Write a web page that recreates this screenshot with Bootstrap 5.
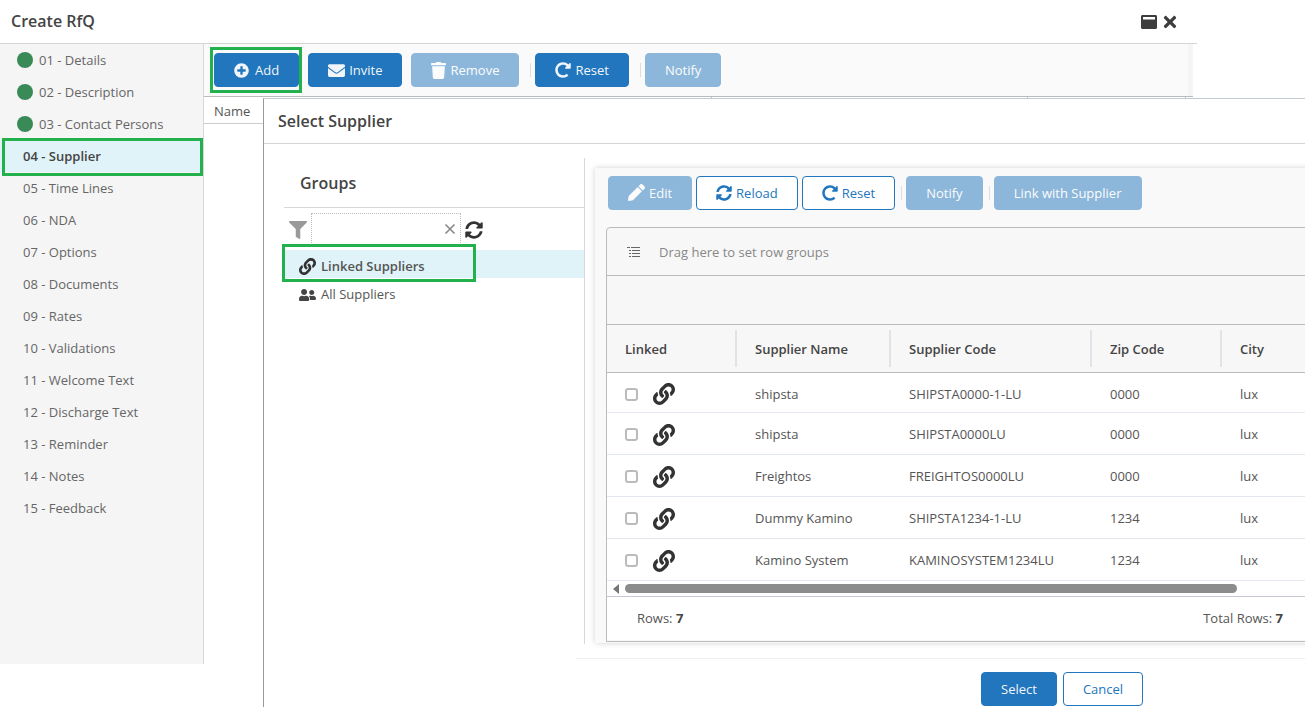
<!DOCTYPE html>
<html lang="en">
<head>
    <meta charset="UTF-8">
    <meta name="viewport" content="width=device-width, initial-scale=1.0">
    <title>Create RfQ</title>
    <link href="https://cdn.jsdelivr.net/npm/bootstrap@5.3.0/dist/css/bootstrap.min.css" rel="stylesheet">
    <style>
        html, body { height: 707px; overflow: hidden; }
        body { font-family: "Open Sans", "Liberation Sans", sans-serif; font-size: 13px; color: #555; background: #fff; position: relative; }
        svg.ico { fill: currentColor; flex: none; display: block; }

        /* back window */
        .rfq-window { width: 1197px; height: 664px; }
        .rfq-title { height: 44px; border-bottom: 1px solid #d4d4d4; padding: 0 20px 0 11px; }
        .rfq-title h1 { font-size: 16px; font-weight: 600; color: #444; margin: 0; }
        .rfq-steps { width: 204px; background: #f5f5f5; border-right: 1px solid #d8d8d8; flex: none; }
        .step-item { height: 32px; padding: 2px 0 0 23px; position: relative; color: #666; }
        .step-item.done { padding-left: 17px; gap: 6px; }
        .step-dot { width: 16px; height: 16px; border-radius: 50%; background: #398a57; flex: none; margin-top: -2px; }
        .step-item.current { background: #e0f3f8; color: #444; font-weight: 600; }
        .hl-box { position: relative; }
        .hl-box::after { content: ""; position: absolute; border: 3px solid #22b14c; pointer-events: none; }
        .step-item.hl-box::after { left: 2px; right: 0; top: -2px; bottom: -4px; }
        .rfq-main { width: 989px; flex: none; }
        .tool-row { background: #fafafa; height: 52px; padding: 9px 0 0 10px; border-right: 5px solid #f5f5f5; gap: 9px; }
        .btn.tool-btn { height: 34px; padding: 2px 19px 0; font-size: 13px; gap: 4px; display: inline-flex; align-items: center; justify-content: center; border-radius: 4px;
            --bs-btn-bg: #2176bd; --bs-btn-border-color: #2176bd; --bs-btn-disabled-bg: #2176bd; --bs-btn-disabled-border-color: #2176bd; --bs-btn-disabled-opacity: .5; --bs-btn-color: #f1f5f9; --bs-btn-disabled-color: #fff; }
        .btn.tool-btn svg.ico { margin-top: -2px; }
        .btn.tool-btn.btn-outline-primary { background: #fff; color: #2176bd; }
        .tool-btn.hl-box::after { left: -5px; right: -4px; top: -7px; bottom: -7px; }
        .tool-sep { width: 1px; height: 14px; background: #ddd; margin: 10px -5px 0 2px; }
        .back-head { height: 28px; border-top: 1px solid #bbb; border-bottom: 1px solid #ccc; padding: 3px 0 0 10px; color: #555;
            background: linear-gradient(#bbb, #bbb) 507px 0 / 1px 2px no-repeat, linear-gradient(#bbb, #bbb) 823px 0 / 1px 2px no-repeat, linear-gradient(#bbb, #bbb) 981px 0 / 1px 2px no-repeat; }

        /* dialog on top */
        .pick-dialog { position: absolute; left: 263px; top: 98px; right: -20px; bottom: 0; background: #fff; border-top: 1px solid #c2cad2; border-left: 1px solid #999; }
        .pick-head { height: 45px; border-bottom: 1px solid #d4d4d4; padding: 2px 0 0 14px; }
        .pick-head h2 { font-size: 16px; font-weight: 600; color: #444; margin: 0; }
        .pick-body { padding-top: 14px; height: 515px; }
        .group-pane { width: 301px; margin-left: 20px; border-right: 1px solid #d8d8d8; height: 486px; flex: none; }
        .group-title { height: 50px; border-bottom: 1px solid #d8d8d8; padding: 2px 0 0 16px; font-size: 16px; font-weight: 600; color: #444; }
        .group-filter { height: 42px; padding: 5px 0 0 5px; gap: 4px; }
        .group-input { width: 150px; height: 32px; border: 1px dotted #bbb; border-bottom: 0; padding-right: 4px; }
        .group-node { height: 28px; padding: 2px 0 0 15px; gap: 5px; color: #555; position: relative; }
        .group-node.active { background: #e0f3f8; font-weight: 600; margin-bottom: 2px; padding-top: 5px; }
        .group-node.hl-box::after { left: -2px; width: 194px; top: -6px; bottom: -4px; }
        .grid-card { flex: 1; min-width: 0; margin: 10px 0 0 10px; height: 475px; background: #f9f9f9; padding: 8px 10px 0 11px; box-shadow: 0 0 6px rgba(0,0,0,.18); }
        .grid-tools { gap: 4px; padding-left: 2px; height: 34px; }
        .grid-tools .tool-sep { margin: 10px 0 0 2px; }
        .grid-box { margin-top: 17px; border: 1px solid #bbb; border-radius: 4px 4px 0 0; height: 415px; background: #f7f7f7; overflow: hidden; }
        .group-bar { height: 48px; border-bottom: 1px solid #bbb; padding: 2px 0 0 20px; gap: 18px; color: #888; }
        .filter-bar { height: 49px; border-bottom: 1px solid #bbb; }
        .rows-table { table-layout: fixed; margin: 0; --bs-table-bg: transparent; --bs-table-color: #555; font-size: 13px; }
        .rows-table th { height: 48px; background: #f7f7f7; border-bottom: 1px solid #bbb; padding: 2px 0 0 18px; vertical-align: middle; font-weight: 600; color: #444; position: relative; }
        .rows-table th:not(:last-child)::after { content: ""; position: absolute; right: 0; top: 5px; bottom: 5px; width: 2px; background: #e0e4e9; }
        .rows-table td { height: 42px; background: #fff; border-bottom: 1px solid #e3e7ee; padding: 2px 0 0 18px; vertical-align: middle; }
        .rows-table tbody tr:first-child td { height: 40px; padding-top: 3px; }
        .row-tick { width: 13px; height: 13px; border: 2px solid #bbb; border-radius: 2px; margin: 0 15px 0 0; }
        .grid-scroll { height: 16px; background: #fff; border-bottom: 1px solid #c8c8d0; }
        .scroll-arrow { width: 0; height: 0; border: 5px solid transparent; border-right: 6px solid #777; border-left: 0; margin: 0 6px 0 6px; }
        .scroll-thumb { width: 612px; height: 9px; border-radius: 5px; background: #8c8c8c; }
        .grid-foot { height: 43px; background: #fff; padding: 0 31px 0 30px; color: #555; }
        .grid-foot b { color: #444; font-weight: 700; }
        .pick-foot { margin-left: 312px; border-top: 1px solid #eee; height: 49px; padding: 13px 182px 0 0; gap: 6px; }
        .pick-foot .btn.tool-btn { width: 76px; padding: 2px 0 0; }
        .pick-foot .btn.tool-btn.btn-outline-primary { width: 80px; }
        .btn.tool-btn.link-btn { width: 148px; padding-left: 0; padding-right: 0; }
    </style>
</head>
<body>
    <svg class="d-none">
        <symbol id="i-link" viewBox="0 0 512 512"><path d="M326.612 185.391c59.747 59.809 58.927 155.698.36 214.59-.11.12-.24.25-.36.37l-67.2 67.2c-59.27 59.27-155.699 59.262-214.96 0-59.27-59.26-59.27-155.7 0-214.96l37.106-37.106c9.84-9.84 26.786-3.3 27.294 10.606.648 17.722 3.826 35.527 9.69 52.721 1.986 5.822.567 12.262-3.783 16.612l-13.087 13.087c-28.026 28.026-28.905 73.66-1.155 101.96 28.024 28.579 74.086 28.749 102.325.51l67.2-67.19c28.191-28.191 28.073-73.757 0-101.83-3.701-3.694-7.429-6.564-10.341-8.569a16.037 16.037 0 0 1-6.947-12.606c-.396-10.567 3.348-21.456 11.698-29.806l21.054-21.055c5.521-5.521 14.182-6.199 20.584-1.731a152.482 152.482 0 0 1 20.522 17.197zM467.547 44.449c-59.261-59.262-155.69-59.27-214.96 0l-67.2 67.2c-.12.12-.25.25-.36.37-58.566 58.892-59.387 154.781.36 214.59a152.454 152.454 0 0 0 20.521 17.196c6.402 4.468 15.064 3.789 20.584-1.731l21.054-21.055c8.35-8.35 12.094-19.239 11.698-29.806a16.037 16.037 0 0 0-6.947-12.606c-2.912-2.005-6.64-4.875-10.341-8.569-28.073-28.073-28.191-73.639 0-101.83l67.2-67.19c28.239-28.239 74.3-28.069 102.325.51 27.75 28.3 26.872 73.934-1.155 101.96l-13.087 13.087c-4.35 4.35-5.769 10.79-3.783 16.612 5.864 17.194 9.042 34.999 9.69 52.721.509 13.906 17.454 20.446 27.294 10.606l37.106-37.106c59.271-59.259 59.271-155.699.001-214.959z"/></symbol>
        <symbol id="i-sync" viewBox="0 0 512 512"><path d="M370.72 133.28C339.458 104.008 298.888 87.962 255.848 88c-77.458.068-144.328 53.178-162.791 126.85-1.344 5.363-6.122 9.15-11.651 9.15H24.103c-7.498 0-13.194-6.807-11.807-14.176C33.933 94.924 134.813 8 256 8c66.448 0 126.791 26.136 171.315 68.685L463.03 40.97C478.149 25.851 504 36.559 504 57.941V192c0 13.255-10.745 24-24 24H345.941c-21.382 0-32.09-25.851-16.971-40.971l41.75-41.749zM32 296h134.059c21.382 0 32.09 25.851 16.971 40.971l-41.75 41.75c31.262 29.273 71.835 45.319 114.876 45.28 77.418-.07 144.315-53.144 162.787-126.849 1.344-5.363 6.122-9.15 11.651-9.15h57.304c7.498 0 13.194 6.807 11.807 14.176C478.067 417.076 377.187 504 256 504c-66.448 0-126.791-26.136-171.315-68.685L48.97 471.03C33.851 486.149 8 475.441 8 454.059V320c0-13.255 10.745-24 24-24z"/></symbol>
        <symbol id="i-redo" viewBox="0 0 512 512"><path d="M256.455 8c66.269.119 126.437 26.233 170.859 68.685l35.715-35.715C478.149 25.851 504 36.559 504 57.941V192c0 13.255-10.745 24-24 24H345.941c-21.382 0-32.09-25.851-16.971-40.971l41.75-41.75c-30.864-28.899-70.801-44.907-113.23-45.273-92.398-.798-170.283 73.977-169.484 169.442C88.764 348.009 162.184 424 256 424c41.127 0 79.997-14.678 110.629-41.556 4.743-4.161 11.906-3.908 16.368.553l39.662 39.662c4.872 4.872 4.631 12.815-.482 17.433C378.202 479.813 319.926 504 256 504 119.034 504 8.001 392.967 8 256.002 7.999 119.193 119.646 7.755 256.455 8z"/></symbol>
        <symbol id="i-plus" viewBox="0 0 512 512"><path d="M256 8C119 8 8 119 8 256s111 248 248 248 248-111 248-248S393 8 256 8zm144 276c0 6.6-5.4 12-12 12h-92v92c0 6.6-5.4 12-12 12h-56c-6.6 0-12-5.4-12-12v-92h-92c-6.6 0-12-5.4-12-12v-56c0-6.6 5.4-12 12-12h92v-92c0-6.6 5.4-12 12-12h56c6.6 0 12 5.4 12 12v92h92c6.6 0 12 5.4 12 12v56z"/></symbol>
        <symbol id="i-mail" viewBox="0 0 512 512"><path d="M502.3 190.8c3.9-3.1 9.7-.2 9.7 4.7V400c0 26.5-21.5 48-48 48H48c-26.5 0-48-21.5-48-48V195.6c0-5 5.7-7.8 9.7-4.7 22.4 17.4 52.1 39.5 154.1 113.6 21.1 15.4 56.7 47.8 92.2 47.6 35.7.3 72-32.8 92.3-47.6 102-74.1 131.6-96.3 154-113.7zM256 320c23.2.4 56.6-29.2 73.4-41.4 132.7-96.3 142.8-104.7 173.4-128.7 5.8-4.5 9.2-11.5 9.2-18.9v-19c0-26.5-21.5-48-48-48H48C21.5 64 0 85.5 0 112v19c0 7.4 3.4 14.3 9.2 18.9 30.6 23.9 40.7 32.4 173.4 128.7 16.8 12.2 50.2 41.8 73.4 41.4z"/></symbol>
        <symbol id="i-trash" viewBox="0 0 448 512"><path d="M432 32H312l-9.4-18.7A24 24 0 0 0 281.1 0H166.8a23.72 23.72 0 0 0-21.4 13.3L136 32H16A16 16 0 0 0 0 48v32a16 16 0 0 0 16 16h416a16 16 0 0 0 16-16V48a16 16 0 0 0-16-16zM53.2 467a48 48 0 0 0 47.9 45h245.8a48 48 0 0 0 47.9-45L416 128H32z"/></symbol>
        <symbol id="i-pencil" viewBox="0 0 512 512"><path d="M497.9 142.1l-46.1 46.1c-4.7 4.7-12.3 4.7-17 0l-111-111c-4.7-4.7-4.7-12.3 0-17l46.1-46.1c18.7-18.7 49.1-18.7 67.9 0l60.1 60.1c18.8 18.7 18.8 49.1 0 67.9zM284.2 99.8L21.6 362.4.4 483.9c-2.9 16.4 11.4 30.6 27.8 27.8l121.5-21.3 262.6-262.6c4.7-4.7 4.7-12.3 0-17l-111-111c-4.8-4.7-12.4-4.7-17.1 0z"/></symbol>
        <symbol id="i-filter" viewBox="0 0 512 512"><path d="M487.976 0H24.028C2.71 0-8.047 25.866 7.058 40.971L192 225.941V432c0 7.831 3.821 15.17 10.237 19.662l80 55.98C298.02 518.69 320 507.493 320 487.98V225.941l184.947-184.97C520.021 25.896 509.338 0 487.976 0z"/></symbol>
        <symbol id="i-users" viewBox="0 0 640 512"><path d="M192 256c61.9 0 112-50.1 112-112S253.9 32 192 32 80 82.1 80 144s50.1 112 112 112zm76.8 32h-8.3c-20.8 10-43.9 16-68.5 16s-47.6-6-68.5-16h-8.3C51.6 288 0 339.6 0 403.2V432c0 26.5 21.5 48 48 48h288c26.5 0 48-21.5 48-48v-28.8c0-63.6-51.6-115.2-115.2-115.2zM480 256c53 0 96-43 96-96s-43-96-96-96-96 43-96 96 43 96 96 96zm48 32h-3.8c-13.9 4.8-28.6 8-44.2 8s-30.3-3.2-44.2-8H432c-20.4 0-39.2 5.9-55.7 15.4 24.4 26.3 39.7 61.2 39.7 99.8v38.4c0 2.2-.5 4.3-.6 6.4H592c26.5 0 48-21.5 48-48 0-61.9-50.1-112-112-112z"/></symbol>
        <symbol id="i-max" viewBox="0 0 512 512"><path d="M464 32H48C21.5 32 0 53.5 0 80v352c0 26.5 21.5 48 48 48h416c26.5 0 48-21.5 48-48V80c0-26.5-21.5-48-48-48zm-16 144H64v-68c0-6.6 5.4-12 12-12h360c6.6 0 12 5.4 12 12v68z"/></symbol>
        <symbol id="i-times" viewBox="0 0 352 512"><path d="M242.72 256l100.07-100.07c12.28-12.28 12.28-32.19 0-44.48l-22.24-22.24c-12.28-12.28-32.19-12.28-44.48 0L176 189.28 75.93 89.21c-12.28-12.28-32.19-12.28-44.48 0L9.21 111.45c-12.28 12.28-12.28 32.19 0 44.48L109.28 256 9.21 356.07c-12.28 12.28-12.28 32.19 0 44.48l22.24 22.24c12.28 12.28 32.2 12.28 44.48 0L176 322.72l100.07 100.07c12.28 12.28 32.2 12.28 44.48 0l22.24-22.24c12.28-12.28 12.28-32.19 0-44.48L242.72 256z"/></symbol>
    </svg>

    <div class="rfq-window d-flex flex-column">
        <div class="rfq-title d-flex align-items-center justify-content-between">
            <h1>Create RfQ</h1>
            <div class="d-flex align-items-center" style="gap:6px;color:#3d3d3d">
                <svg class="ico" width="16" height="16"><use href="#i-max"/></svg>
                <svg class="ico" width="14" height="18"><use href="#i-times"/></svg>
            </div>
        </div>
        <div class="d-flex flex-grow-1">
            <div class="rfq-steps">
                <div class="step-item done d-flex align-items-center"><span class="step-dot"></span>01 - Details</div>
                <div class="step-item done d-flex align-items-center"><span class="step-dot"></span>02 - Description</div>
                <div class="step-item done d-flex align-items-center"><span class="step-dot"></span>03 - Contact Persons</div>
                <div class="step-item current hl-box d-flex align-items-center">04 - Supplier</div>
                <div class="step-item d-flex align-items-center">05 - Time Lines</div>
                <div class="step-item d-flex align-items-center">06 - NDA</div>
                <div class="step-item d-flex align-items-center">07 - Options</div>
                <div class="step-item d-flex align-items-center">08 - Documents</div>
                <div class="step-item d-flex align-items-center">09 - Rates</div>
                <div class="step-item d-flex align-items-center">10 - Validations</div>
                <div class="step-item d-flex align-items-center">11 - Welcome Text</div>
                <div class="step-item d-flex align-items-center">12 - Discharge Text</div>
                <div class="step-item d-flex align-items-center">13 - Reminder</div>
                <div class="step-item d-flex align-items-center">14 - Notes</div>
                <div class="step-item d-flex align-items-center">15 - Feedback</div>
            </div>
            <div class="rfq-main">
                <div class="tool-row d-flex align-items-start">
                    <button class="btn btn-primary tool-btn hl-box" style="gap:6px"><svg class="ico" width="15" height="15"><use href="#i-plus"/></svg>Add</button>
                    <button class="btn btn-primary tool-btn"><svg class="ico" width="17" height="17"><use href="#i-mail"/></svg>Invite</button>
                    <button class="btn btn-primary tool-btn disabled"><svg class="ico" width="15" height="17"><use href="#i-trash"/></svg>Remove</button>
                    <span class="tool-sep"></span>
                    <button class="btn btn-primary tool-btn"><svg class="ico" width="16" height="16"><use href="#i-redo"/></svg>Reset</button>
                    <span class="tool-sep"></span>
                    <button class="btn btn-primary tool-btn disabled">Notify</button>
                </div>
                <div class="back-head d-flex align-items-center">Name</div>
            </div>
        </div>
    </div>

    <div class="pick-dialog d-flex flex-column">
        <div class="pick-head d-flex align-items-center"><h2>Select Supplier</h2></div>
        <div class="pick-body d-flex align-items-start">
            <div class="group-pane">
                <div class="group-title d-flex align-items-center">Groups</div>
                <div class="group-filter d-flex align-items-start">
                    <svg class="ico mt-2" width="18" height="18" style="color:#999"><use href="#i-filter"/></svg>
                    <div class="group-input d-flex align-items-center justify-content-end">
                        <svg width="12" height="12" stroke="#888" stroke-width="1.6"><path d="M1.5 1.5l9 9M10.5 1.5l-9 9"/></svg>
                    </div>
                    <svg class="ico mt-2" width="18" height="18" style="color:#333"><use href="#i-sync"/></svg>
                </div>
                <div class="group-node active hl-box d-flex align-items-center"><svg class="ico" width="17" height="17" style="color:#333"><use href="#i-link"/></svg>Linked Suppliers</div>
                <div class="group-node d-flex align-items-center"><svg class="ico" width="17" height="14" style="color:#444"><use href="#i-users"/></svg>All Suppliers</div>
            </div>
            <div class="grid-card">
                <div class="grid-tools d-flex">
                    <button class="btn btn-primary tool-btn disabled"><svg class="ico" width="17" height="17"><use href="#i-pencil"/></svg>Edit</button>
                    <button class="btn btn-outline-primary tool-btn"><svg class="ico" width="16" height="16"><use href="#i-sync"/></svg>Reload</button>
                    <button class="btn btn-outline-primary tool-btn"><svg class="ico" width="16" height="16"><use href="#i-redo"/></svg>Reset</button>
                    <span class="tool-sep"></span>
                    <button class="btn btn-primary tool-btn disabled">Notify</button>
                    <span class="tool-sep"></span>
                    <button class="btn btn-primary tool-btn disabled link-btn">Link with Supplier</button>
                </div>
                <div class="grid-box">
                    <div class="group-bar d-flex align-items-center">
                        <svg width="14" height="12" fill="#666">
                            <rect x="0" y="1" width="3" height="1"/><rect x="4" y="1" width="9" height="1"/>
                            <rect x="2" y="4" width="2" height="1"/><rect x="5" y="4" width="8" height="1"/>
                            <rect x="2" y="7" width="2" height="1"/><rect x="5" y="7" width="8" height="1"/>
                            <rect x="2" y="10" width="2" height="1"/><rect x="5" y="10" width="8" height="1"/>
                        </svg>
                        <span>Drag here to set row groups</span>
                    </div>
                    <div class="filter-bar"></div>
                    <table class="table rows-table">
                        <colgroup><col style="width:130px"><col style="width:154px"><col style="width:201px"><col style="width:130px"><col></colgroup>
                        <thead>
                            <tr><th>Linked</th><th>Supplier Name</th><th>Supplier Code</th><th>Zip Code</th><th>City</th></tr>
                        </thead>
                        <tbody id="gridRows"></tbody>
                    </table>
                    <div class="grid-scroll d-flex align-items-center"><span class="scroll-arrow"></span><span class="scroll-thumb"></span></div>
                    <div class="grid-foot d-flex align-items-center justify-content-between">
                        <span>Rows: <b>7</b></span>
                        <span>Total Rows: <b>7</b></span>
                    </div>
                </div>
            </div>
        </div>
        <div class="pick-foot d-flex justify-content-end">
            <button class="btn btn-primary tool-btn">Select</button>
            <button class="btn btn-outline-primary tool-btn">Cancel</button>
        </div>
    </div>

    <script>
        const rows = [
            ['shipsta', 'SHIPSTA0000-1-LU', '0000', 'lux'],
            ['shipsta', 'SHIPSTA0000LU', '0000', 'lux'],
            ['Freightos', 'FREIGHTOS0000LU', '0000', 'lux'],
            ['Dummy Kamino', 'SHIPSTA1234-1-LU', '1234', 'lux'],
            ['Kamino System', 'KAMINOSYSTEM1234LU', '1234', 'lux']
        ];
        document.getElementById('gridRows').innerHTML = rows.map(r => `
            <tr>
                <td><div class="d-flex align-items-center"><input type="checkbox" class="form-check-input row-tick"><svg class="ico" width="22" height="22" style="color:#333"><use href="#i-link"/></svg></div></td>
                ${r.map(v => `<td>${v}</td>`).join('')}
            </tr>`).join('');
    </script>
    <script src="https://cdn.jsdelivr.net/npm/bootstrap@5.3.0/dist/js/bootstrap.bundle.min.js"></script>
</body>
</html>
